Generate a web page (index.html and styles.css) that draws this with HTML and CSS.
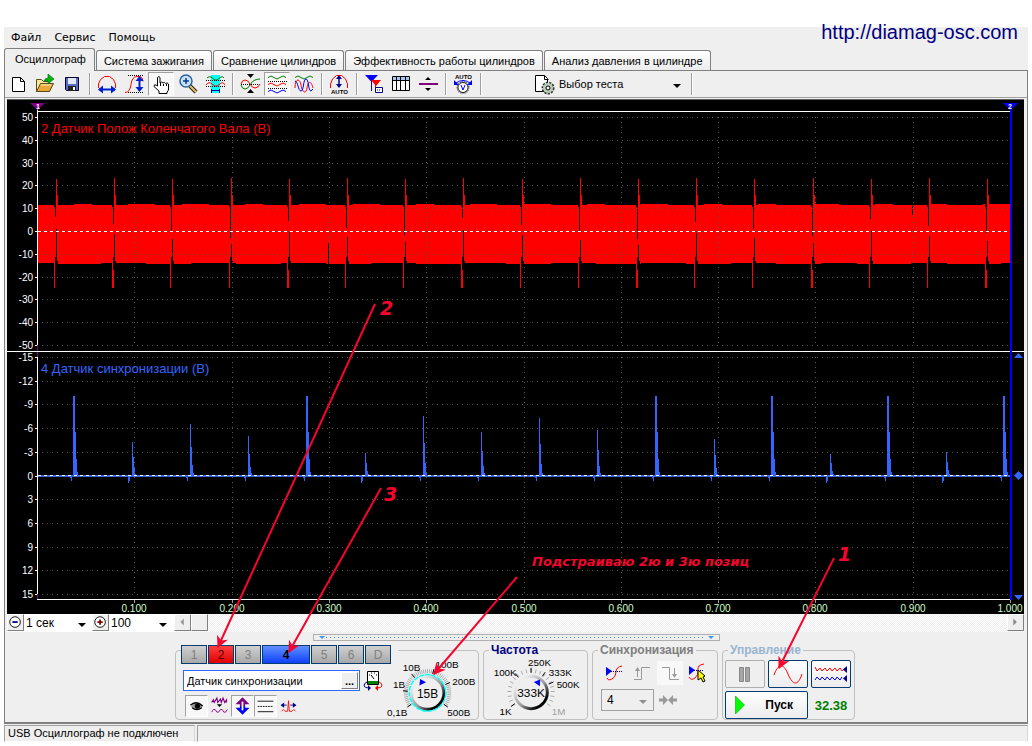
FILE: index.html
```
<!DOCTYPE html>
<html lang="ru">
<head>
    <meta charset="UTF-8">
    <meta name="viewport" content="width=device-width, initial-scale=1.0">
    <title>USB Осциллограф</title>
    <link rel="stylesheet" href="styles.css">
</head>
<body>

    <a class="site" href="http://diamag-osc.com">http://diamag-osc.com</a>

    <main class="app">
        <nav class="menu">
            <a href="#">Файл</a>
            <a href="#">Сервис</a>
            <a href="#">Помощь</a>
        </nav>

        <div class="tabs">
            <button class="tab active">Осциллограф</button>
            <button class="tab">Система зажигания</button>
            <button class="tab">Сравнение цилиндров</button>
            <button class="tab">Эффективность работы цилиндров</button>
            <button class="tab">Анализ давления в цилиндре</button>
        </div>

        <section class="page">
            <div class="toolbar">
                <button class="tool" aria-label="Новый">
                    <svg viewBox="0 0 24 22"><path d="M6.500 4.500h8l4 4v10h-12z" fill="#fff" stroke="#000"/><path d="M14.500 4.500v4h4" fill="none" stroke="#000"/></svg>
                </button>
                <button class="tool" aria-label="Открыть">
                    <svg viewBox="0 0 24 22"><path d="M3.500 18.500v-12h5l2 2h6v10z" fill="#ffe79a" stroke="#5a4a20"/><path d="M3.500 18.500l4-8h13l-4 8z" fill="#e8a93a" stroke="#5a4a20"/><path d="M8 12h10" stroke="#fff2c0"/><path d="M11 8q1-3 4-3V1l6 5-6 5V8z" fill="#00b400" stroke="#063" stroke-width=".6"/></svg>
                </button>
                <button class="tool" aria-label="Сохранить">
                    <svg viewBox="0 0 24 22"><path d="M5.500 4.500h13v13h-12l-1-1z" fill="#5c6cc4" stroke="#000030"/><path d="M8 5h8v6H8z" fill="#e4e8f4"/><path d="M8 13h8v5H8z" fill="#222"/><path d="M13 14h2v3h-2z" fill="#fff"/></svg>
                </button>
                <i class="sep"></i>
                <button class="tool" aria-label="Развертка">
                    <svg viewBox="0 0 24 22"><path d="M3.500 15v-4q1-5 6-7.500h5q5 2.500 6 7.500v4" fill="none" stroke="red"/><path d="M4 16.500h16" stroke="#0020d0" stroke-width="2"/><path d="M3 16.500l5-4v8zM21 16.500l-5-4v8z" fill="#0020d0"/></svg>
                </button>
                <button class="tool" aria-label="Амплитуда">
                    <svg viewBox="0 0 24 22"><path d="M6 2.500h16M6 19.500h16" stroke="#000" stroke-dasharray="1 1"/><path d="M3 19.500q5 0 6-8t6-8h3q3 1 3 5" fill="none" stroke="red"/><path d="M17.500 5v12" stroke="#0020d0" stroke-width="2"/><path d="M17.500 3l4 5h-8zM17.500 19l4-5h-8z" fill="#0020d0"/></svg>
                </button>
                <button class="tool pressed" aria-label="Рука">
                    <svg viewBox="0 0 24 22"><path d="M8.500 13V4.500q1.500-2 2.500 0V10q1.500-2 3 0 1.500-1.500 2.500 .5 1.500-1.500 3 .5v5q0 2-1.500 3v1.500h-8V18l-5-4.500q0-2.500 2-1.500z" fill="#fff" stroke="#000"/><path d="M11.500 10v3M14.500 11v2M17.500 11v2" stroke="#000"/></svg>
                </button>
                <button class="tool" aria-label="Лупа">
                    <svg viewBox="0 0 24 22"><path d="M14 13l6 6" stroke="#222" stroke-width="4"/><path d="M14 13l6 6" stroke="#f0c060" stroke-width="2"/><circle cx="10" cy="8" r="6" fill="#c9e2fa" stroke="#31639c" stroke-width="1.500"/><path d="M7 8h6M10 5v6" stroke="#003a8c" stroke-width="1.500"/></svg>
                </button>
                <button class="tool" aria-label="Выделение">
                    <svg viewBox="0 0 24 22"><path d="M8 2h9v18H8z" fill="#0ff"/><path d="M4 5q2-2 4-1l4 3h2l4-3q2-1 3 1" fill="none" stroke="#008000"/><path d="M3 7.500h19M3 13.500h19" stroke="#000" stroke-dasharray="1 1"/><path d="M3 12q3-4 6-1l3 2h2l3-2q3-3 5 1" fill="none" stroke="red"/><path d="M8.500 16v4M16.500 16v4M8 17.500h9" stroke="#008"/></svg>
                </button>
                <i class="sep"></i>
                <button class="tool" aria-label="Совместить">
                    <svg viewBox="0 0 24 22"><path d="M9 1h7l-3.500 4zM9 20h7l-3.500-4z" fill="#000"/><path d="M3 11.500h19" stroke="#000" stroke-dasharray="1 1"/><path d="M3 11q1-4 4-4t5 4 5 4 5-4" fill="none" stroke="red"/><path d="M3 12q1 4 4 4t5-4 5-5 5-1" fill="none" stroke="#008000"/></svg>
                </button>
                <button class="tool pressed" aria-label="Раздельно">
                    <svg viewBox="0 0 24 22"><g fill="none"><path d="M3 4.500q3-3 6 0t6 0 6 0" stroke="#008000"/><path d="M3 11.500q3-3 6 0t6 0 6 0" stroke="red"/><path d="M3 18.500q3-3 6 0t6 0 6 0" stroke="#00f"/></g><path d="M3 8.500h19M3 15.500h19" stroke="#000" stroke-dasharray="1 1"/></svg>
                </button>
                <button class="tool" aria-label="Наложить">
                    <svg viewBox="0 0 24 22"><g fill="none"><path d="M3 4.500q3-3 6 0t6 0 6 0" stroke="#008000"/><path d="M3 15c0-10 5-10 6-3s5 10 6 3 4-8 6 0" stroke="red"/><path d="M3 8c3 0 3 10 6 10s2-12 5-12 2 12 5 12l2-2" stroke="#00f"/></g></svg>
                </button>
                <i class="sep"></i>
                <button class="tool" aria-label="Автомасштаб">
                    <svg viewBox="0 0 24 22"><path d="M3.500 15v-4q1-6 6-8.500h5q5 2.500 6 8.500v4" fill="none" stroke="red"/><path d="M12 5v8" stroke="#008" stroke-width="1.500"/><path d="M12 2l3 4H9zM12 15l3-4H9z" fill="#008"/><text class="tiny" x="4" y="21">AUTO</text></svg>
                </button>
                <i class="sep"></i>
                <button class="tool" aria-label="Маркеры">
                    <svg viewBox="0 0 24 22"><path d="M3 2h13L9.500 9z" fill="#00f"/><path d="M9.500 2v16" stroke="#00f"/><path d="M9 7h10l-5 6z" fill="red"/><path d="M13.500 12v6" stroke="red"/><path d="M13.500 14.500h7v5h-7z" fill="#fff" stroke="#008"/><path d="M15 17h1m1 0h1" stroke="#008"/></svg>
                </button>
                <button class="tool" aria-label="Таблица">
                    <svg viewBox="0 0 24 22"><path d="M3.500 3.500h17v14h-17z" fill="#fff" stroke="#000"/><path d="M4 4h16v3H4z" fill="#a4c8f0"/><path d="M4 7.500h16M7.500 4v13M11.500 4v13M16.500 4v13" stroke="#000"/></svg>
                </button>
                <button class="tool" aria-label="Разделитель">
                    <svg viewBox="0 0 24 22"><path d="M9 7h6l-3-3zM9 15h6l-3 3z" fill="#000"/><path d="M3 11h19" stroke="#800080" stroke-width="2"/></svg>
                </button>
                <i class="sep"></i>
                <button class="tool" aria-label="Авто напряжение">
                    <svg viewBox="0 0 24 22"><text class="tiny" x="4" y="6">AUTO</text><circle cx="12" cy="14.500" r="5.500" fill="#fff" stroke="#555" stroke-width="2" stroke-dasharray="1 1"/><circle cx="12" cy="14.500" r="5" fill="#fff" stroke="#222"/><path d="M10 12l2 5 2-5" fill="none" stroke="#00f"/><path d="M5 10q7-5 14 0" fill="none" stroke="#00f"/><path d="M3 7v5h5zM21 7v5h-5z" fill="#00f"/></svg>
                </button>
                <i class="sep"></i>
                <div class="test">
                    <svg viewBox="0 0 24 22"><path d="M3.500 2.500h9l3 3v13h-12z" fill="#fff" stroke="#000"/><path d="M12.500 2.500v4h4" fill="none" stroke="#000"/><circle cx="16" cy="15" r="5" fill="#a8c4a8" stroke="#333" stroke-width="3" stroke-dasharray="2 1"/><circle cx="16" cy="15" r="5" fill="#b8ccb8"/><circle cx="16" cy="15" r="2" fill="#fff" stroke="#000"/></svg>
                    <span class="drop">
                        <select aria-label="Выбор теста"><option>Выбор теста</option></select>
                    </span>
                </div>
                <i class="sep"></i>
            </div>

            <svg class="chart" id="chart" viewBox="0 0 1017 514"></svg>

            <div class="scale">
                <button class="small" aria-label="Уменьшить"><svg viewBox="0 0 17 17"><circle cx="8" cy="8" r="6" fill="#fff" stroke="#000"/><path d="M5 8h6" stroke="#000080" stroke-width="2"/></svg></button>
                <span class="drop time"><select aria-label="Время"><option>1 сек</option></select></span>
                <button class="small" aria-label="Увеличить"><svg viewBox="0 0 17 17"><circle cx="8" cy="8" r="6" fill="#fff" stroke="#000"/><path d="M5 8h6M8 5v6" stroke="#800000" stroke-width="2"/></svg></button>
                <span class="drop percent"><select aria-label="Масштаб"><option>100</option></select></span>
                <div class="scroll">
                    <button class="small" aria-label="Влево"><svg viewBox="0 0 17 17"><path d="M10 4v8L6 8z" fill="#999"/></svg></button>
                    <button class="small" aria-label="Ползунок"></button>
                    <button class="small end" aria-label="Вправо"><svg viewBox="0 0 17 17"><path d="M6 4v8l4-4z" fill="#888"/></svg></button>
                </div>
            </div>

            <div class="splitter"></div>

            <div class="panels">
                <div class="group channels">
                    <div class="left">
                        <div class="numbers">
                            <button>1</button>
                            <button class="red">2</button>
                            <button>3</button>
                            <button class="blue">4</button>
                            <button>5</button>
                            <button>6</button>
                            <button>D</button>
                        </div>
                        <div class="sensor">
                            <div class="field">
                                <input type="text" aria-label="Датчик" value="Датчик синхронизации">
                                <button aria-label="Выбрать датчик">...</button>
                            </div>
                            <svg viewBox="0 0 20 22"><path d="M4.500 1.500h11v13h-11z" fill="#fff" stroke="#000"/><path d="M6 5h1m1-2h1m2 0h1m1 2h1M8 5l3 4" stroke="#000"/><path d="M5 11h10v3H5z" fill="#008000"/><path d="M4 12q-3 1-3 4 1 2 5 2" fill="none" stroke="#008"/><path d="M5 15v6l3-3z" fill="#008"/><path d="M16 12q3 1 3 4-1 2-5 2" fill="none" stroke="red"/><path d="M15 15v6l-3-3z" fill="red"/></svg>
                        </div>
                        <div class="modes">
                            <button class="tool pressed" aria-label="Показать"><svg viewBox="0 0 24 22"><path d="M6 9q6-5 12 0l1 3q-6 6-13 0z" fill="#999"/><path d="M5 10q7-6 14 1M7 13q5 4 11 0" fill="none" stroke="#000" stroke-width="1.500"/><circle cx="13" cy="11" r="3" fill="#000"/></svg></button>
                            <button class="tool" aria-label="Фильтр"><svg viewBox="0 0 24 22"><path d="M3 7l2-3 1 3 3-5 1 5 3-4 1 4 2-5 2 5 2-3v3" fill="none" stroke="#800080" stroke-width="1.300"/><path d="M9 9h6l-3 3z" fill="#000"/><path d="M3 18l2-3h2l2 3h2l2-3h2l2 3h2l2-3" fill="none" stroke="#800080"/></svg></button>
                            <button class="tool pressed" aria-label="Инверсия"><svg viewBox="0 0 24 22"><path d="M12 1l8 8h-5v2H9V9H4z" fill="#800080"/><path d="M12 21l8-8h-5v-2H9v2H4z" fill="#00f"/><path d="M12 6v10" stroke="#fff" stroke-width="2"/></svg></button>
                            <button class="tool pressed" aria-label="Уровни"><svg viewBox="0 0 24 22"><path d="M3 5.500h18M3 17.500h18" stroke="#000"/><path d="M3 11.500h18" stroke="#000" stroke-dasharray="2 1"/></svg></button>
                            <button class="tool" aria-label="Сдвиг"><svg viewBox="0 0 24 22"><path d="M4 17l2-2 2 2h3l1-12 1 12h3l2-2 2 2" fill="none" stroke="red"/><path d="M4 10h6M14 10h6" stroke="#008"/><path d="M3 10l4-3v6zM21 10l-4-3v6z" fill="#008"/></svg></button>
                        </div>
                    </div>
                    <svg class="knob" id="volts" viewBox="0 0 93 68"></svg>
                </div>

                <fieldset class="group frequency">
                    <legend>Частота</legend>
                    <svg class="knob" id="freq" viewBox="0 0 102 62"></svg>
                </fieldset>

                <fieldset class="group sync">
                    <legend>Синхронизация</legend>
                    <div class="row">
                        <button class="tool" aria-label="Фронт"><svg viewBox="0 0 24 22"><path d="M5 16q1 3 5 1t4-7 6-6" fill="none" stroke="red"/><path d="M4 5v9l6-5z" fill="#00f"/><path d="M9 9.500h11" stroke="#008" stroke-dasharray="1 1"/></svg></button>
                        <button class="tool" aria-label="Нарастание"><svg viewBox="0 0 24 22"><path d="M4 17.500h7.500v-12H20M7.500 15V7" fill="none" stroke="#999"/><path d="M5 9h5L7.500 5z" fill="#999"/></svg></button>
                        <button class="tool lit" aria-label="Спад"><svg viewBox="0 0 24 22"><path d="M4 5.500h7.500v12H21M16.500 6v8" fill="none" stroke="#999"/><path d="M14 12h5l-2.500 4z" fill="#999"/></svg></button>
                        <button class="tool" aria-label="Выбрать уровень"><svg viewBox="0 0 24 22"><path d="M3 15q2 4 6 1t3-8 6-6" fill="none" stroke="red"/><path d="M3 4v9l6-5z" fill="#00f"/><path d="M8 8.500h9" stroke="#008" stroke-dasharray="1 1"/><path d="M12 8l7 6-2 1 2 4-2 1-2-4-3 2z" fill="#ff0" stroke="#000"/></svg></button>
                    </div>
                    <div class="row">
                        <span class="drop source"><select aria-label="Канал" disabled><option>4</option></select></span>
                        <svg viewBox="0 0 24 22"><path d="M3 11h4M17 11h4" stroke="#999" stroke-width="3"/><path d="M7 6v10l5-5zM17 6v10l-5-5z" fill="#999"/></svg>
                    </div>
                </fieldset>

                <fieldset class="group control">
                    <legend>Управление</legend>
                    <div class="buttons">
                        <button class="key" disabled aria-label="Пауза"><svg viewBox="0 0 36 24"><path d="M12.500 5.500h4v14h-4zM18.500 5.500h4v14h-4z" fill="#a5a5a5" stroke="#888"/></svg></button>
                        <button class="key" aria-label="Синус"><svg viewBox="0 0 36 24"><path d="M4 13C8 2 13 0 18 12s10 12 14 0" fill="none" stroke="red"/></svg></button>
                        <button class="key" aria-label="Запись"><svg viewBox="0 0 36 24"><path d="M2 5l2 4 3-3 2 3 3-3 2 3 3-3 2 3 3-3 2 3 3-3 2 3 3-3" fill="none" stroke="red"/><path d="M2 18l2-3 3 3 2-3 3 3 2-3 3 3 2-3 3 3 2-3 3 3 2-3" fill="none" stroke="#00f"/><path d="M34 4v7l-4-3.500zM34 13v7l-4-3.500z" fill="#008"/></svg></button>
                        <button class="key start"><svg viewBox="0 0 12 20"><path d="M1.500 1l9 9-9 9z" fill="#0f0" stroke="#080" stroke-width=".5"/></svg>Пуск</button>
                        <output>32.38</output>
                    </div>
                </fieldset>
            </div>
        </section>

        <footer class="status">
            <span>USB Осциллограф не подключен</span>
            <span></span>
        </footer>
    </main>

    <!-- пояснения поверх окна -->
    <svg class="notes" viewBox="0 0 1032 746">
        <defs>
            <marker id="head" viewBox="0 0 10 10" refX="9" refY="5" markerWidth="6" markerHeight="6" orient="auto"><path d="M0 0l10 5-10 5 3-5z" fill="#f5052d"/></marker>
        </defs>
        <path class="arrow" d="M375 304L218 647"/>
        <path class="arrow" d="M381 488L289 652"/>
        <path class="arrow" d="M517 577L434 674"/>
        <path class="arrow" d="M834 558L779 668"/>
        <text class="num" x="380" y="315">2</text>
        <text class="num" x="384" y="501">3</text>
        <text class="num" x="838" y="561">1</text>
        <text class="hint" x="532" y="566">Подстраиваю 2ю и 3ю позиц</text>
    </svg>

    <script src="script.js"></script>
</body>
</html>
```
FILE: styles.css
```
body {
    margin: 0;
    padding-top: 27px;
    background-color: white;
    font-family: "Liberation Sans", Arial, sans-serif;
    font-size: 11px;
    color: black;
}
button, select, input {
    font-family: inherit;
    font-size: inherit;
    color: inherit;
    margin: 0;
    padding: 0;
    border: none;
    border-radius: 0;
    background: none;
}
svg {
    display: block;
}
.site {
    position: absolute;
    top: 21px;
    right: 14px;
    font-size: 20px;
    line-height: 23px;
    color: #000080;
    text-decoration: none;
}
.app {
    margin: 0 4px;
    background-color: #efefef;
}

/* Menu y pestañas */
.menu {
    display: flex;
    gap: 13px;
    padding: 0 7px;
    font-family: "DejaVu Sans", Verdana, sans-serif;
    line-height: 21px;
}
.menu a {
    color: black;
    text-decoration: none;
}
.tabs {
    display: flex;
    align-items: flex-end;
    gap: 1px;
    height: 22px;
}
.tab {
    height: 20px;
    padding: 0 7px;
    background: linear-gradient(white, #ececec);
    border: 1px solid #808080;
    border-bottom: none;
    border-radius: 3px 3px 0 0;
    white-space: nowrap;
}
.tab.active {
    height: 23px;
    padding: 0 8px 3px 10px;
    margin-bottom: -1px;
    background: #efefef;
}
.page {
    border: 1px solid #808080;
    border-bottom-width: 2px;
}

/* Barra de herramientas */
.toolbar {
    display: flex;
    align-items: center;
    gap: 1px;
    height: 26px;
    border-bottom: 1px solid #a0a0a0;
}
.tool {
    flex: none;
    box-sizing: border-box;
    width: 26px;
    height: 24px;
    border: 1px solid transparent;
}
.tool svg, .test svg, .sync svg {
    width: 24px;
    height: 22px;
}
.tool.pressed {
    background-color: #f8f8f8;
    border-color: #a0a0a0 white white #a0a0a0;
}
.tool.lit {
    background-color: #f8f8f8;
}
.sep {
    width: 7px;
    height: 22px;
    background: linear-gradient(90deg, #a0a0a0 50%, white 50%) 3px 0 / 2px 22px no-repeat;
}
.tiny {
    font-size: 6px;
    font-weight: bold;
}
.test {
    display: flex;
    align-items: center;
    margin-left: 47px;
}
.drop {
    position: relative;
    display: block;
}
.drop select {
    appearance: none;
    width: 100%;
    height: 100%;
}
.drop::after {
    content: "";
    position: absolute;
    right: 6px;
    top: 50%;
    border: 4px solid transparent;
    border-top-color: black;
    border-bottom: none;
}
.test .drop {
    width: 131px;
    height: 20px;
}
.test select {
    padding-left: 3px;
}

/* Grafico */
.chart {
    box-sizing: border-box;
    width: calc(100% - 5px);
    margin: 1px 3px 0 2px;
    border-top: 1px solid #606060;
    background-color: black;
}
.chart text {
    font-size: 10px;
    fill: white;
}
.chart .title {
    font-size: 13px;
}
.chart .sec {
    fill: #ccffcc;
}
.scale {
    display: flex;
    height: 18px;
    margin: 0 3px 0 2px;
    background-color: white;
}
.small {
    box-sizing: border-box;
    flex: none;
    width: 17px;
    height: 17px;
    background-color: #efefef;
    border: 1px solid;
    border-color: white #808080 #808080 white;
}
.small svg {
    width: 15px;
    height: 15px;
}
.time {
    width: 68px;
}
.percent {
    width: 64px;
}
.scale select {
    padding-left: 2px;
    font-size: 12px;
}
.scroll {
    flex: 1;
    display: flex;
    margin-left: 1px;
    background: repeating-conic-gradient(#efefef 0 25%, white 0 50%) 0 0 / 2px 2px;
}
.scroll .end {
    margin-left: auto;
}
.splitter {
    box-sizing: border-box;
    position: relative;
    width: 407px;
    height: 7px;
    margin: 2px auto 0;
    border: 1px solid #b0b0b0;
    background: repeating-linear-gradient(90deg, #3d95f5 0 1px, transparent 1px 4px) 12px 2px / 380px 1px no-repeat;
}
.splitter::before, .splitter::after {
    content: "";
    position: absolute;
    top: 1px;
    left: 5px;
    border: 3px solid transparent;
    border-top-color: #3d95f5;
    border-bottom: none;
}
.splitter::after {
    left: auto;
    right: 5px;
}

/* Paneles de abajo */
.panels {
    display: flex;
    justify-content: center;
    align-items: flex-end;
    gap: 4px;
    padding: 2px 2px 2px 0;
}
.group {
    box-sizing: border-box;
    min-height: 77px;
    margin: 0;
    padding: 0;
    border: 1px solid #c0c0c0;
    border-radius: 4px;
}
legend {
    margin-left: 5px;
    padding: 0 2px;
    font-size: 12px;
    line-height: 14px;
    font-weight: bold;
    color: #808080;
}
.channels {
    display: flex;
    width: 304px;
    min-height: 70px;
}
.left {
    width: 210px;
    padding-left: 5px;
    box-sizing: border-box;
}
.numbers {
    display: flex;
    gap: 1px;
    width: 217px;
    margin-top: -6px;
    background-color: #efefef;
}
.numbers button {
    box-sizing: border-box;
    width: 26px;
    height: 19px;
    border: 1px solid #003c74;
    background: linear-gradient(#d0d0d0, #a8a8a8);
    font-size: 12px;
    color: #808080;
}
.numbers .red {
    background: linear-gradient(#ff4040, #e00000);
    color: #500000;
}
.numbers .blue {
    width: 48px;
    background: linear-gradient(#6090ff, #1040ff);
    color: black;
    font-weight: bold;
}
.sensor {
    display: flex;
    gap: 3px;
    margin: 6px 0 3px 2px;
}
.sensor svg {
    width: 20px;
    height: 22px;
}
.field {
    box-sizing: border-box;
    display: flex;
    align-items: center;
    width: 177px;
    height: 21px;
    padding: 1px;
    border: 1px solid #3366ff;
    background-color: white;
}
.field input {
    flex: 1;
    min-width: 0;
    padding-left: 2px;
}
.field button {
    width: 17px;
    height: 17px;
    background-color: #efefef;
    border: 1px solid;
    border-color: white #808080 #808080 white;
    font-weight: bold;
    line-height: 8px;
}
.modes {
    display: flex;
    margin-left: 4px;
}
.modes .tool {
    width: 23px;
    height: 22px;
}
.modes svg {
    width: 21px;
    height: 20px;
}
.channels .knob {
    width: 92px;
    height: 68px;
}
.knob text {
    font-size: 10px;
}
.knob .value {
    font-size: 12px;
    text-anchor: middle;
}
.knob .off {
    fill: #a0a0a0;
}
.frequency {
    width: 105px;
}
.frequency legend {
    color: #000080;
}
.frequency .knob {
    width: 102px;
    height: 61px;
}
.sync {
    width: 126px;
}
.row {
    display: flex;
    align-items: center;
    gap: 2px;
    margin: 4px 0 0 8px;
}
.source {
    box-sizing: border-box;
    width: 53px;
    height: 22px;
    border: 1px solid #a0a0a0;
    font-size: 12px;
}
.source select {
    padding-left: 5px;
    color: black;
    opacity: 1;
}
.source::after {
    border-top-color: #909090;
}
.control {
    width: 133px;
}
.control legend {
    color: #99b4d1;
}
.buttons {
    display: grid;
    grid-template-columns: 40px 40px 40px;
    gap: 3px;
    margin: 3px 0 0 2px;
}
.key {
    height: 28px;
    border: 1px solid #003c74;
    border-radius: 2px;
    background: linear-gradient(white, #ececec);
}
.key:disabled {
    border-color: #b0b0b0;
    background: #efefef;
}
.key svg {
    width: 36px;
    height: 24px;
    margin: auto;
}
.start {
    grid-column: span 2;
    display: flex;
    align-items: center;
    padding: 0 14px 0 8px;
    font-size: 12px;
    font-weight: bold;
}
.start svg {
    width: 12px;
    height: 20px;
    margin: 0 auto 0 0;
}
output {
    align-self: center;
    font-size: 13px;
    font-weight: bold;
    color: #008000;
    text-align: center;
}

/* Barra de estado */
.status {
    display: flex;
    gap: 2px;
    padding-top: 1px;
}
.status span {
    box-sizing: border-box;
    width: 191px;
    height: 17px;
    padding-left: 3px;
    border: 1px solid;
    border-color: #a0a0a0 #d8d8d8 white #a0a0a0;
    line-height: 15px;
}
.status span:last-child {
    flex: 1;
}

.notes {
    position: absolute;
    top: 0;
    left: 0;
    width: 100%;
    pointer-events: none;
}
.arrow {
    stroke: #f5052d;
    stroke-width: 2;
    marker-end: url(#head);
}
.notes text {
    font-family: "DejaVu Sans", Verdana, sans-serif;
    font-weight: bold;
    font-style: italic;
    fill: #f5052d;
}
.notes .num {
    font-size: 19px;
}
.notes .hint {
    font-size: 13px;
}
```
FILE: script.js
```
function linea(d, color, extra) {
    return '<path d="' + d + '" fill="none" stroke="' + color + '" ' + (extra || '') + '/>';
}
function texto(x, y, t, extra) {
    return '<text x="' + x + '" y="' + y + '" ' + (extra || '') + '>' + t + '</text>';
}

function dibujarGrafico() {
    let s = '<g shape-rendering="crispEdges">';
    let left = 30.5, right = 1003;

    // canal 2: banda roja con los picos del sensor
    let top = 'M31 104', bottom = '';
    for (let x = 31; x < right; x += 9) {
        top += 'V' + (104 + (Math.sin(x * 0.11) > 0.3 ? 0 : 1)) + 'H' + Math.min(x + 9, right);
        bottom = 'V' + (163 + (Math.sin(x * 0.07) > 0.2 ? 0 : 1)) + 'H' + x + bottom;
    }
    s += '<path d="' + top + bottom + 'Z" fill="red"/>';
    for (let i = 0; i < 17; i++) {
        let x = Math.round(49 + i * 58.2) + 0.5;
        s += linea('M' + (x - 1) + ' 104V' + (117 + i * 7 % 24) + 'M' + (x - 2) + ' 104v3', 'black');
        s += linea('M' + x + ' ' + (129 + i * 5 % 17) + 'V164M' + (x - 1) + ' 157V164M' + (x + 1) + ' 161V164', 'black');
        s += linea('M' + (x - 2) + ' 158V188' + (i % 3 === 1 ? 'M' + (x - 1) + ' 170V188' : ''), 'red');
        s += linea('M' + x + ' ' + (79 - i % 2) + 'V112M' + (x + 1) + ' 95V106', 'red');
    }
    s += linea('M321.5 143V164M905.5 103V115', 'black');

    // canal 4: picos azules
    let altos = [79, 33, 51, 39, 79, 22, 59, 43, 57, 45, 79, 36, 79, 21, 79, 23, 79];
    s += linea('M31 376H1003', '#3366ff', 'stroke-width="2"');
    altos.forEach(function (h, i) {
        let x = Math.round(67 + i * 58.15) + 0.5;
        s += linea('M' + x + ' 376V' + (375 - h) + 'M' + (x + 1) + ' 376V' + (375 - h * 0.55) +
            'M' + (x + 2) + ' 376V' + (375 - h * 0.2) + 'M' + (x + 3) + ' 376V' + (375 - h * 0.04) +
            'M' + (x - 3) + ' 376v5M' + (x - 4) + ' 376v' + (h < 35 ? 7 : 2), '#3366ff');
        if (h > 70) {
            s += linea('M' + (x - 1) + ' 376V' + (375 - h), '#3366ff');
        }
    });

    // rejilla, ejes y marcas
    let puntos = 'stroke-dasharray="1 4"';
    for (let i = 0; i <= 10; i++) {
        let y = Math.round(17 + i * 22.8) + 0.5;
        s += linea('M30 ' + y + 'H' + right, '#555', puntos) + linea('M28 ' + y + 'h3', 'white');
        y = Math.round(257 + i * 23.7) + 0.5;
        s += linea('M30 ' + y + 'H' + right, '#555', puntos) + linea('M28 ' + y + 'h3', 'white');
        if (i > 0) {
            let x = Math.round(30 + i * 97.3) + 0.5;
            s += linea('M' + x + ' 17V245M' + x + ' 257V494', '#555', puntos) + linea('M' + x + ' 500v3', '#999');
        }
    }
    s += linea('M31 131.5H1003M31 375.5H1003', 'white', 'stroke-dasharray="3 3"');
    s += linea('M' + left + ' 8V500', 'white') + linea('M' + left + ' 245V257M' + left + ' 494V499', '#800080');
    s += linea('M30 11.5H1003M0 251.5H1017M30 499.5H1003', 'white');
    s += linea('M1003.5 8V500', '#00f', 'stroke-width="2"');
    s += '</g>';

    // marcadores
    s += '<path d="M23 3h15l-7.500 7z" fill="#800080"/><path d="M996 3h15l-7.500 7z" fill="#00f"/>';
    s += texto(29, 9, '1', 'style="font-size:7px;font-weight:bold"') + texto(1001, 9, '2', 'style="font-size:7px;font-weight:bold"');
    s += '<path d="M1007 258h9l-4.500-5zM1007 495h9l-4.500 5zM1011.500 371l4.500 4.500-4.500 4.500-4.500-4.500z" fill="#3366ff"/>';

    for (let i = 0; i <= 10; i++) {
        s += texto(26, Math.round(21 + i * 22.8), 50 - i * 10, 'text-anchor="end"');
        s += texto(26, Math.round(261 + i * 23.7), -15 + i * 3, 'text-anchor="end"');
        if (i > 0) {
            s += texto(Math.round(30 + i * 97.3), 512, (i / 10).toFixed(3), 'class="sec" text-anchor="middle"');
        }
    }
    s += texto(34, 33, '2 Датчик Полож Коленчатого Вала (В)', 'class="title" style="fill:red"');
    s += texto(34, 273, '4 Датчик синхронизации (В)', 'class="title" style="fill:#3366ff"');
    document.getElementById('chart').innerHTML = s;
}

// ang en grados, 0 arriba
function dibujarMando(id, cx, cy, ticks, marcas, valor, ang, aro, textos) {
    function p(a, r) {
        a = a * Math.PI / 180;
        return (cx + r * Math.sin(a)).toFixed(1) + ' ' + (cy - r * Math.cos(a)).toFixed(1);
    }
    let s = '<defs><linearGradient id="g' + id + '" x1="0" y1="0" x2="1" y2="1"><stop offset=".2" stop-color="#eee"/><stop offset=".55" stop-color="#999"/><stop offset=".8" stop-color="#000"/></linearGradient></defs>';
    for (let i = 0; i <= ticks; i++) {
        let a = -125 + i * 250 / ticks;
        s += linea('M' + p(a, 20) + 'L' + p(a, 24), '#aaa');
    }
    marcas.forEach(function (a) {
        s += linea('M' + p(a, 20) + 'L' + p(a, 25), 'black');
    });
    s += '<circle cx="' + cx + '" cy="' + cy + '" r="18" fill="url(#g' + id + ')"/>';
    s += '<circle cx="' + cx + '" cy="' + cy + '" r="15" fill="#efefef"/>';
    if (aro) {
        s += '<circle cx="' + cx + '" cy="' + cy + '" r="18.500" fill="none" stroke="#00ffff" stroke-width="1.500" stroke-dasharray="5 1"/>';
    }
    s += '<path d="M' + p(ang, 16) + 'L' + p(ang - 20, 11) + 'L' + p(ang + 20, 11) + 'Z" fill="#00f"/>';
    textos.forEach(function (t) {
        s += texto(t[0], t[1], t[2], t[3]);
    });
    s += texto(cx, cy + 5, valor, 'class="value"');
    document.getElementById(id).innerHTML = s;
}

dibujarGrafico();
dibujarMando('volts', 42, 42, 50, [-125, -85, -40, 15, 65, 125], '15В', -28, true,
    [[1, 65, '0,1В'], [7, 37, '1В'], [17, 20, '10В'], [50, 17, '100В'], [67, 34, '200В'], [62, 65, '500В']]);
dibujarMando('freq', 47, 36, 20, [-125, -40, 0, 35, 65], '333K', 35, false,
    [[15, 59, '1K'], [9, 19, '100K'], [44, 9, '250K'], [65, 19, '333K'], [73, 31, '500K'], [68, 59, '1M', 'class="off"']]);
```
